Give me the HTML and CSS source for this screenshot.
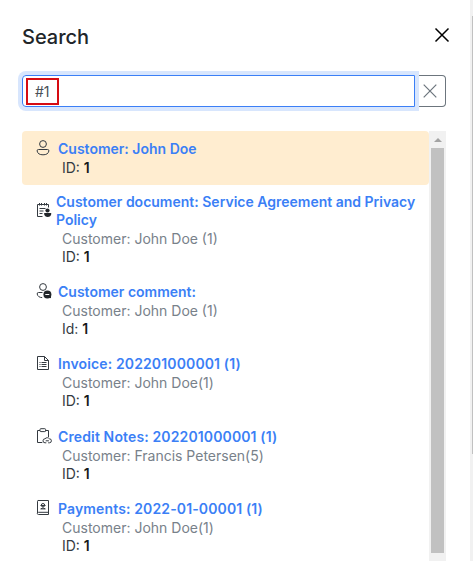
FILE: index.html
```html
<!DOCTYPE html>
<html lang="en">
<head>
<meta charset="utf-8">
<title>Search</title>
<link rel="stylesheet" href="styles.css">
</head>
<body>
<div class="page">
<main class="panel">
  <header class="head">
    <h1>Search</h1>
    <svg class="close" viewBox="0 0 14 14"><path d="M.5.5l13 13M13.5.5l-13 13"/></svg>
  </header>
  <div class="search">
    <div class="field"><span class="query">#1</span></div>
    <div class="clear"><svg viewBox="0 0 14 14"><path d="M.7.7l12.6 12.6M13.3.7L.7 13.3"/></svg></div>
  </div>
  <div class="results">
    <div class="list">
      <div class="item active">
        <svg class="icon" viewBox="0 0 16 16"><circle cx="7" cy="4" r="3.4"/><path d="M2.500 9.500h9q1.500 0 1.400 1.400C12.500 13.600 10.300 14.800 7 14.800S1.500 13.600 1.100 10.900Q1 9.500 2.500 9.500z"/></svg>
        <div class="text"><a>Customer: John Doe</a><p class="id">ID: <b>1</b></p></div>
      </div>
      <div class="item doc">
        <svg class="icon" viewBox="0 0 16 16"><path d="M6.500 14.500h-5V2.500h11v3M3.500 1v2.500M5.500 1v2.500M8.500 1v2.500M10.500 1v2.500M3.500 6.500h6M3.500 9h4M3.500 11.500h3"/><g class="solid"><circle cx="11.500" cy="8.500" r="2.100"/><path d="M8.700 11h6q.8 0 .6 1c-.4 2-1.600 3-3.600 3s-3.200-1-3.600-3q-.2-1 .6-1z"/></g></svg>
        <div class="text"><a>Customer document: Service Agreement and Privacy Policy</a><p class="sub">Customer: John Doe (1)</p><p class="id">ID: <b>1</b></p></div>
      </div>
      <div class="item">
        <svg class="icon" viewBox="0 0 16 16"><circle cx="7" cy="4" r="3.400"/><path d="M6.500 9.500h-4Q1 9.500 1.200 11c.4 2.400 2.300 3.500 5 3.600"/><g class="solid"><circle cx="11.400" cy="11.400" r="4"/><path d="M12 14l3 1.300V12z"/></g><path class="light" d="M9.300 11.500h4"/></svg>
        <div class="text"><a>Customer comment:</a><p class="sub">Customer: John Doe (1)</p><p class="id">Id: <b>1</b></p></div>
      </div>
      <div class="item num">
        <svg class="icon" viewBox="0 0 16 16"><path d="M1.500 1.500h7l4 4v9h-11zM8.500 1.500v4h4M3.500 7.500h1M5.500 7.500h5M3.500 9.500h1M5.500 9.500h5M3.500 11.500h1M5.500 11.500h5"/></svg>
        <div class="text"><a>Invoice: 202201000001 (1)</a><p class="sub">Customer: John Doe(1)</p><p class="id">ID: <b>1</b></p></div>
      </div>
      <div class="item num">
        <svg class="icon" viewBox="0 0 16 16"><path d="M4 2.500H1.500v12h4.800M9.500 2.500h3v6.500M4 1.500q0-.8.800-.8h4q.8 0 .8.800v1.400q0 .7-.8.700h-4q-.8 0-.8-.7zM10.300 14.800H9a2 2 0 0 1 0-4q1-1.100 2.300-1.100t2.100 1.100a2 2 0 0 1 0 4h-1.200M9.700 12.800h3.200"/></svg>
        <div class="text"><a>Credit Notes: 202201000001 (1)</a><p class="sub">Customer: Francis Petersen(5)</p><p class="id">ID: <b>1</b></p></div>
      </div>
      <div class="item num">
        <svg class="icon" viewBox="0 0 16 16"><path d="M2 .5h10.500v14H2.500q-1.200 0-1.200-1.200t1.200-1h10M1.500 13V1.300Q1.500.5 2.200.5"/><circle cx="7" cy="5.200" r="1.700"/><path d="M4.700 8.900q2.300-2 4.600 0zM4.500 5.500h5"/></svg>
        <div class="text"><a>Payments: 2022-01-00001 (1)</a><p class="sub">Customer: John Doe(1)</p><p class="id">ID: <b>1</b></p></div>
      </div>
    </div>
    <div class="scroll"><i class="arrow"></i><i class="thumb"></i></div>
  </div>
</main>
<aside class="track"><i></i></aside>
</div>
</body>
</html>
```
FILE: styles.css
```css
* { box-sizing: border-box; }
body { margin: 0; background: #fff; font: 14px/18px Inter, sans-serif; color: #212529; overflow: hidden; }
.page { display: flex; width: 473px; height: 561px; }
.panel { width: 470px; padding: 0 24px 0 22px; display: flex; flex-direction: column; }
.head { display: flex; justify-content: space-between; align-items: flex-start; height: 75px; flex: none; padding-top: 25px; }
h1 { margin: 0; font-size: 20px; line-height: 24px; font-weight: 500; }
svg { fill: none; stroke: #343a40; stroke-width: 1; overflow: visible; }
.close { width: 14px; height: 14px; margin: 3px -3px 0 0; stroke: #000; stroke-width: 1.500; }
.search { display: flex; height: 32px; flex: none; }
.field { width: 393px; border: 1px solid #3b7ff6; border-radius: 4px 0 0 4px; box-shadow: 0 0 0 4px #d8e6fd; padding: 2px 3px; position: relative; }
.query { display: block; width: 33px; height: 27px; border: 2px solid #d60c12; padding: 2px 0 0 7px; line-height: 20px; color: #495057; }
.clear { flex: 1; border: 1px solid #6c757d; border-left: 0; border-radius: 0 4px 4px 0; display: flex; align-items: center; justify-content: center; padding-right: 1px; }
.clear svg { width: 14px; height: 14px; stroke: #6c757d; stroke-width: 1.200; }
.results { display: flex; flex: 1; min-height: 0; margin-top: 24px; }
.list { width: 407px; overflow: hidden; }
.item { display: flex; height: 72.400px; padding: 8px 8px 0 14px; }
.active { height: 54px; padding-top: 9px; background: #ffedd0; border-radius: 4px; }
.doc { height: 90px; }
.icon { width: 16px; height: 16px; flex: none; margin-right: 6px; }
.doc .icon { margin: 9px 4px 0 0; }
.doc .sub, .doc .id { padding-left: 6px; }
a { display: block; margin-bottom: 1px; color: #3b7ff6; font-weight: 600; }
.num a { letter-spacing: .13px; }
p { margin: 0; padding-left: 4px; }
.sub { color: #78818a; }
.id { color: #343a40; }
b { font-weight: 600; color: #16191c; }
.solid { fill: #212529; stroke: none; }
.light { stroke: #fff; }
.scroll { width: 17px; background: #f1f1f1; padding: 0 2px; height: 430px; }
.arrow { display: block; width: 0; border: 4px solid transparent; border-top: 0; border-bottom: 4px solid #a3a3a3; margin: 7px auto 6px 3px; }
.thumb { display: block; height: 405px; background: #c1c1c1; }
.track { width: 3px; background: #f1f1f1; padding: 16px 0 0 2px; }
.track i { display: block; height: 438px; background: #c1c1c1; }
```
